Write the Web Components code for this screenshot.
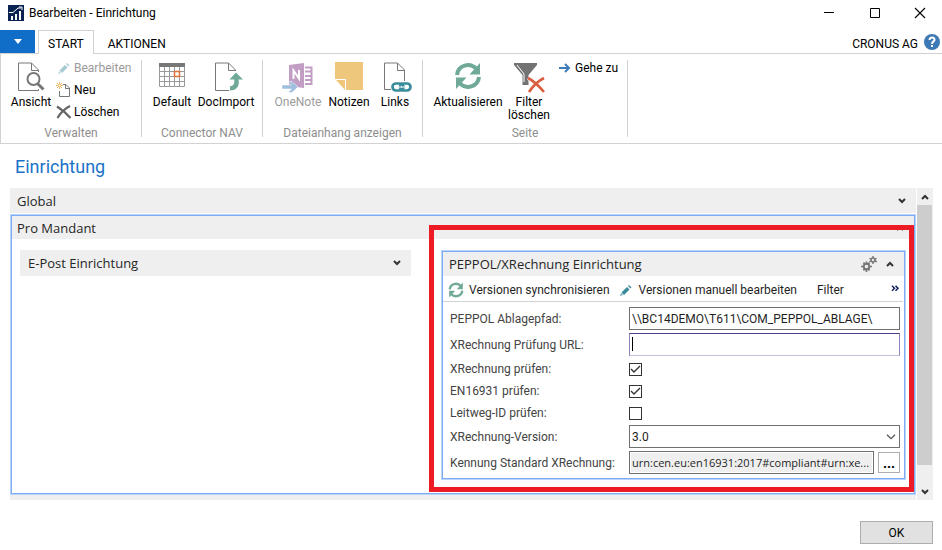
<!DOCTYPE html>
<html lang="de">
<head>
<meta charset="utf-8">
<title>Bearbeiten - Einrichtung</title>
<style>
html,body{margin:0;min-height:100%;background:#fff}
body{font:12px/16px Roboto,"Open Sans",sans-serif;color:#000}
</style>
</head>
<body>
<setup-window></setup-window>

<script>
const ICONS = {
  app:[16,16,'<rect width="16" height="16" fill="#0a2350"/><path d="M1 7.5h4L10 3h3" stroke="#fff" fill="none"/><path d="M11 2h3v3" fill="none" stroke="#fff"/><path d="M3 11h2v4H3zM7 9h2v6H7zM11 6h2v9h-2z" fill="#fff"/>'],
  view:[28,30,'<path d="M21.500 10V8L14.500 1H1.500V28.500H21.500V27" fill="#fff" stroke="#777"/><path d="M14.500 1V8.500H21.500" fill="none" stroke="#777"/><circle cx="16.500" cy="17" r="6" fill="#fff" stroke="#777" stroke-width="2"/><path d="M20.500 21.500L26.500 27.500" stroke="#777" stroke-width="3"/>'],
  pencilOff:[16,16,'<path d="M2 14l1-3 2 2z" fill="#bcd8de"/><path d="M3.500 10.500L9 5l2.500 2.500L6 13z" fill="#a6cad3"/><path d="M10 4l1-1 2.500 2.500-1 1z" fill="#a6cad3"/>'],
  pencil:[16,16,'<path d="M2 14l1-3 2 2z" fill="#65a8b4"/><path d="M3.500 10.500L9 5l2.500 2.500L6 13z" fill="#368a9a"/><path d="M10 4l1-1 2.500 2.500-1 1z" fill="#368a9a"/>'],
  neu:[16,16,'<path d="M7 2.500h3L13.500 6v8.500h-10V9M9.500 2.500v4h4" fill="none" stroke="#777"/><path d="M3.500 0v7M0 3.500h7M1 1l5 5M6 1L1 6" stroke="#e8b765"/><circle cx="3.500" cy="3.500" r="1" fill="#fff"/>'],
  del:[16,16,'<path d="M1 2.500C5 5 10 9 14.500 14M14 2C8 5 5 8 1.500 14" fill="none" stroke="#666" stroke-width="2.300"/>'],
  table:[26,26,'<path d="M.500 1V24.500H25.500V1M1 9.500H25M1 14.500H25M1 19.500H25M5.500 5V24M10.500 5V24M15.500 5V24M20.500 5V24" fill="none" stroke="#9a9a9a"/><path d="M0 1h26v4H0z" fill="#777"/><path d="M15.500 9.500h5v5h-5z" fill="#fff" stroke="#dd7338" stroke-width="1.500"/>'],
  docimp:[24,30,'<path d="M21.500 9V8L14.500 1H1.500V28.500H15" fill="#fff" stroke="#777"/><path d="M14.500 1V8.500H21.500" fill="none" stroke="#777"/><path d="M16 28.500c7 0 10-5 8.500-11h4.500L22 10.500 15.500 17.500H20c1 3 0 6-4 7z" fill="#70a998"/>'],
  onenote:[32,30,'<path d="M23 5.500h6.500V22H23M23 9.500h6M23 14h6M23 18h6" fill="none" stroke="#c29dc4" stroke-width="2"/><path d="M7 3l15-2v25L7 24z" fill="#c29dc4"/><path d="M11.500 17V8.500L17 16.500V8" fill="none" stroke="#fff" stroke-width="2"/><path d="M0 23h9.500L6 19.500h4l6 5.500-6 5.500H6L9.500 27H0z" fill="#a0bfdf" stroke="#fff" stroke-width=".5"/>'],
  note:[28,28,'<path d="M0 0H28V28H11V17H0z" fill="#efc77c"/><path d="M1 18H10V28z" fill="#efc77c"/>'],
  links:[22,30,'<path d="M20.500 19V8L13.500 1H.500V27.500H7M13.500 1V8.500H20.500" fill="none" stroke="#777"/><g fill="none" stroke="#398c9c" stroke-width="2.700"><rect x="8.500" y="21.500" width="11" height="7" rx="3.500"/><rect x="16" y="21.500" width="10.500" height="7" rx="3.500"/></g><path d="M14 25h7" stroke="#fff"/>'],
  refresh:[28,28,'<g fill="none" stroke="#70a998" stroke-width="4"><path d="M3 13C4 3 16 0 22.500 7"/><path d="M25 15C24 25 12 28 5.500 21"/></g><path d="M26 1v11.500H15.500zM2 27V15.500h10.500z" fill="#70a998"/>'],
  filterx:[32,32,'<path d="M1 1h23v2l-8.500 10v10h-6V13L1 3z" fill="#737373"/><path d="M4 3l7 9v8" stroke="#fff" fill="none"/><path d="M15 16c6 3 11 8 16 14M31 16c-6 3-11 8-15 14" stroke="#fff" stroke-width="4" fill="none"/><path d="M15 16c6 3 11 8 16 14M31 16c-6 3-11 8-15 14" stroke="#d95f40" stroke-width="2.600" fill="none"/>'],
  go:[12,12,'<path d="M0 6h10M6 2l4 4-4 4" stroke="#3e7bb8" stroke-width="2" fill="none"/>'],
  help:[16,16,'<circle cx="8" cy="8" r="8" fill="#3d7ab5"/><path d="M5.500 6c0-3.500 5.500-3 5 0C10.300 7.500 8 7.500 8 10" fill="none" stroke="#fff" stroke-width="2"/><path d="M7 11h2v2H7z" fill="#fff"/>'],
  min:[10,10,'<path d="M0 4.500h10" stroke="#000"/>'],
  max:[10,10,'<path d="M.500.500h9v9h-9z" stroke="#000" fill="none"/>'],
  close:[10,10,'<path d="M0 0l10 10M10 0L0 10" stroke="#000" stroke-width="1.100"/>'],
  drop:[8,5,'<path d="M0 0h8L4 5z" fill="#fff"/>'],
  down:[8,6,'<path d="M1 1l3 3 3-3" fill="none" stroke="#333" stroke-width="2"/>'],
  up:[8,6,'<path d="M1 5l3-3 3 3" fill="none" stroke="#333" stroke-width="2"/>'],
  thin:[10,6,'<path d="M1 .700l4 4 4-4" fill="none" stroke="#555" stroke-width="1.300"/>'],
  more:[8,7,'<path d="M1 .700l2.500 2.500L1 5.700M4.500.700L7 3.200 4.500 5.700" fill="none" stroke="#102060" stroke-width="1.500"/>'],
  gears:[16,16,'<g fill="none" stroke="#777"><circle cx="5.500" cy="10.500" r="2.800" stroke-width="2"/><path d="M5.500 5.500v2.500M5.500 13v3M0 10.500h3M8 10.500h3M2.500 6.500l1.500 2M7 12.500l1.500 2M8.500 6.500L7 8.500M4 12.500l-1.500 2" stroke-width="1.700"/><circle cx="12" cy="4" r="1.900" stroke-width="1.500"/><path d="M12 0v2M12 6v2M8.500 2.500l1.500.5M14 5l2 .800M15.500 2.500L14 3M10 5l-1.500.800" stroke-width="1.400"/></g>'],
  check:[11,11,'<path d="M1 5l3 3 6-6" fill="none" stroke="#333" stroke-width="1.400"/>']
};

function define(name, html){
  customElements.define(name, class extends HTMLElement{
    connectedCallback(){
      if(this.shadowRoot) return;
      const t=document.createElement('template');
      t.innerHTML='<style>*,:host{box-sizing:border-box}button,input,select{font:inherit;color:inherit;margin:0}button{border:0;padding:0;background:none}</style>'+(typeof html==='function'?html(this):html);
      this.attachShadow({mode:'open'}).append(t.content.cloneNode(true));
    }
  });
}
const attr=(el,n,d='')=>el.getAttribute(n)??d;

define('ui-icon', el=>{
  const [w,h,body]=ICONS[attr(el,'name')];
  const s=+attr(el,'size',w);
  return `<style>:host{display:inline-block;flex:none;line-height:0}svg{display:block;overflow:visible}</style>
  <svg aria-hidden="true" width="${s}" height="${Math.round(s*h/w)}" viewBox="0 0 ${w} ${h}">${body}</svg>`;
});

define('title-bar', `<style>
:host{display:flex;height:30px;align-items:center;padding:0 0 4px 8px}
span{flex:1;padding-left:5px}
button{width:46px;height:26px;display:grid;place-items:center}
button:last-child{width:44px}
</style><ui-icon name="app"></ui-icon><span><slot></slot></span>
<button aria-label="Minimieren"><ui-icon name="min"></ui-icon></button>
<button aria-label="Maximieren"><ui-icon name="max"></ui-icon></button>
<button aria-label="Schließen"><ui-icon name="close"></ui-icon></button>`);

define('ribbon-tabs', `<style>
:host{display:flex;height:24px;border-bottom:1px solid #d2d2d2}
.file{width:35px;background:#106ec8;display:grid;place-items:center;margin-right:3px}
.tab{height:24px;padding:3px 9px 0;border:1px solid transparent;border-bottom:0}
.on{background:#fff;border-color:#d2d2d2}
.tab+.tab{margin-left:4px}
.co{margin-left:auto;padding:6px 6px 0 0}
.help{width:16px;height:16px;margin:4px 2px 0 0}
</style><button class="file" aria-label="Datei"><ui-icon name="drop"></ui-icon></button>
<button class="tab on">START</button><button class="tab">AKTIONEN</button>
<span class="co">CRONUS AG</span><button class="help" aria-label="Hilfe"><ui-icon name="help"></ui-icon></button>`);

define('ribbon-group', el=>`<style>
:host{display:flex;flex-direction:column;flex:none;height:77px;width:${attr(el,'width')}px;border-right:1px solid #d2d2d2}
.b{flex:1;display:flex;padding-left:${attr(el,'inset','6')}px}
.n{text-align:center;color:#8e8e8e;height:12px;line-height:16px}
</style><div class="b"><slot></slot></div><div class="n">${attr(el,'name')}</div>`);

define('ribbon-big', el=>`<style>
:host{display:block;width:${attr(el,'width')}px;flex:none}
button{width:100%;text-align:center;display:flex;flex-direction:column;align-items:center;line-height:13px}
i{height:36px;display:block;padding-top:2px}
:host([off]) button{color:#9b9b9b}
</style><button ${el.hasAttribute('off')?'disabled':''}><i><ui-icon name="${attr(el,'icon')}"></ui-icon></i><span><slot></slot></span></button>`);

define('ribbon-small', el=>`<style>
:host{display:block}
button{display:flex;align-items:center;gap:2px;height:16px;white-space:nowrap}
:host([off]) button{color:#9b9b9b}
:host([wide]) button{gap:4px}
</style><button ${el.hasAttribute('off')?'disabled':''}><ui-icon name="${attr(el,'icon')}"></ui-icon><slot></slot></button>`);

define('app-ribbon', `<style>
:host{display:flex;height:90px;border:solid #d2d2d2;border-width:0 0 1px 1px;padding-top:6px}
.col{display:flex;flex-direction:column;gap:6px}
.s{padding-left:1px}
.g{padding-left:8px}
</style>
<ribbon-group name="Verwalten" width="141"><ribbon-big icon="view" width="48">Ansicht</ribbon-big>
<div class="col s"><ribbon-small icon="pencilOff" off>Bearbeiten</ribbon-small><ribbon-small icon="neu">Neu</ribbon-small><ribbon-small icon="del">Löschen</ribbon-small></div></ribbon-group>
<ribbon-group name="Connector NAV" width="121" inset="2"><ribbon-big icon="table" width="56">Default</ribbon-big><ribbon-big icon="docimp" width="52">DocImport</ribbon-big></ribbon-group>
<ribbon-group name="Dateianhang anzeigen" width="160" inset="8"><ribbon-big icon="onenote" width="54" off>OneNote</ribbon-big><ribbon-big icon="note" width="48">Notizen</ribbon-big><ribbon-big icon="links" width="44">Links</ribbon-big></ribbon-group>
<ribbon-group name="Seite" width="205"><ribbon-big icon="refresh" width="78">Aktualisieren</ribbon-big><ribbon-big icon="filterx" width="44">Filter löschen</ribbon-big><div class="col g"><ribbon-small icon="go" wide>Gehe zu</ribbon-small></div></ribbon-group>`);

define('fast-tab', el=>`<style>
:host{display:block;background:#fff}
:host([active]){border:1px solid #b9d4fb}
:host([active]) .in{border:1px solid #7dacf5}
header{display:flex;align-items:center;background:#efefef;height:${attr(el,'head','25')}px;padding:0 10px 0 ${attr(el,'pad','7')}px;gap:9px;color:#262626;font-family:"Open Sans",sans-serif;font-size:13px;line-height:18px}
h2{font:inherit;margin:0;flex:1}
button{display:grid;place-items:center;height:16px}
</style><div class="in"><header><h2>${attr(el,'name')}</h2>${el.hasAttribute('gears')?'<button aria-label="Anpassen"><ui-icon name="gears"></ui-icon></button>':''}<button aria-label="${attr(el,'name')} umschalten"><ui-icon name="${el.hasAttribute('open')?'up':'down'}"></ui-icon></button></header><slot></slot></div>`);

define('tab-actions', `<style>
:host{display:flex;align-items:center;height:26px;border-bottom:1px solid #d2d2d2;padding:2px 4px 0 5px;margin-right:1px;color:#1f1f1f;white-space:nowrap}
button{display:flex;align-items:center;gap:5px;margin-right:8px}
.f{margin-left:12px}.m{margin:0 0 2px auto}
</style><button><ui-icon name="refresh" size="16"></ui-icon>Versionen synchronisieren</button>
<button><ui-icon name="pencil"></ui-icon>Versionen manuell bearbeiten</button><button class="f">Filter</button><button class="m" aria-label="Mehr"><ui-icon name="more"></ui-icon></button>`);

define('setup-field', el=>{
  const k=attr(el,'kind','text'), v=attr(el,'value');
  const c={
    text:`<input id="c" class="t" type="text" value="${v}">`,
    focus:`<input id="c" class="t focus" type="text" value="">`,
    check:`<span class="cb"><input id="c" type="checkbox" ${v?'checked':''}>${v?'<ui-icon name="check"></ui-icon>':''}</span>`,
    select:`<span class="sel"><select id="c" class="t"><option>${v}</option></select><ui-icon name="thin"></ui-icon></span>`,
    lookup:`<input id="c" class="t ro" type="text" readonly value="${v}"><button aria-label="Auswählen">...</button>`
  }[k];
  return `<style>
:host{display:flex;align-items:center;height:${k==='check'?19:23}px;${k==='check'?'padding-top:1px':''}}
label{width:179px;flex:none;color:#444;white-space:nowrap}
.t{flex:1;width:100%;min-width:0;height:23px;border:1px solid #707070;border-radius:0;background:#fff;padding:0 2px;color:#1f1f1f;outline:0;appearance:none}
.t.focus{border-color:#45408a #8a84b8 #c5c0e0;background:linear-gradient(#000,#000) 2px 3px/1px 14px no-repeat #fff}
.ro{background:#efefef;box-shadow:inset 0 0 0 1px #fff;text-overflow:ellipsis;font-family:"Open Sans",sans-serif;font-size:11px}
.sel{position:relative;flex:1;display:flex}
.sel ui-icon{position:absolute;right:4px;top:9px;pointer-events:none}
.cb{position:relative;width:13px;height:13px}
.cb input{appearance:none;display:block;width:13px;height:13px;border:1px solid #333;background:#fff}
.cb ui-icon{position:absolute;left:1px;top:1px;pointer-events:none}
button{width:22px;height:21px;margin-left:4px;border:1px solid #adadad;background:#fff;font-weight:bold;font-size:14px;line-height:18px}
</style><label for="c">${attr(el,'name')}</label>${c}`;
});

define('scroll-bar', `<style>
:host{display:flex;flex-direction:column;width:16px;flex:none;background:#efefef}
button{height:17px;display:grid;place-items:center}
.track{flex:1;display:flex;flex-direction:column}.thumb{flex:260;background:#cdcdcd;margin-right:1px}.rest{flex:18}
</style><button aria-label="Nach oben"><ui-icon name="up"></ui-icon></button><div class="track"><div class="thumb"></div><div class="rest"></div></div><button aria-label="Nach unten"><ui-icon name="down"></ui-icon></button>`);

define('setup-window', `<style>
:host{display:block}
main{padding:0 9px 6px 10px}
h1{margin:0;padding:11px 0 0 5px;height:44px;font-weight:400;font-size:18px;line-height:24px;color:#1a73c8}
.area{display:flex;gap:1px}
.tabs{flex:1;min-width:0;background:#efefef;padding-bottom:5px}
.gap{height:1px;background:#fff}
.cols{display:grid;grid-template-columns:391fr 465fr;gap:30px;align-items:start;padding:11px 8px 13px}
.mark{position:relative;min-width:0}
.mark::after{content:"";position:absolute;inset:-25px -8px -12px -12px;border:5px solid #ed1c24;pointer-events:none}
.fields{display:flex;flex-direction:column;gap:3px;padding:5px 4px 4px 7px}
footer{display:flex;justify-content:flex-end;padding-top:21px}
.ok{width:73px;height:23px;background:#e1e1e1;border:1px solid #adadad}
</style>
<title-bar>Bearbeiten - Einrichtung</title-bar>
<ribbon-tabs></ribbon-tabs>
<app-ribbon></app-ribbon>
<main><h1>Einrichtung</h1>
<div class="area"><div class="tabs">
<fast-tab name="Global"></fast-tab><div class="gap"></div>
<fast-tab name="Pro Mandant" head="23" pad="5" active open>
<div class="cols"><fast-tab name="E-Post Einrichtung" head="26" pad="8"></fast-tab>
<div class="mark"><fast-tab name="PEPPOL/XRechnung Einrichtung" head="24" pad="6" active open gears>
<tab-actions></tab-actions>
<div class="fields">
<setup-field name="PEPPOL Ablagepfad:" value="\\\\BC14DEMO\\T611\\COM_PEPPOL_ABLAGE\\"></setup-field>
<setup-field name="XRechnung Prüfung URL:" kind="focus"></setup-field>
<setup-field name="XRechnung prüfen:" kind="check" value="1"></setup-field>
<setup-field name="EN16931 prüfen:" kind="check" value="1"></setup-field>
<setup-field name="Leitweg-ID prüfen:" kind="check"></setup-field>
<setup-field name="XRechnung-Version:" kind="select" value="3.0"></setup-field>
<setup-field name="Kennung Standard XRechnung:" kind="lookup" value="urn:cen.eu:en16931:2017#compliant#urn:xe..."></setup-field>
</div></fast-tab></div></div>
</fast-tab></div><scroll-bar></scroll-bar></div>
<footer><button class="ok">OK</button></footer></main>`);
</script>
</body>
</html>
